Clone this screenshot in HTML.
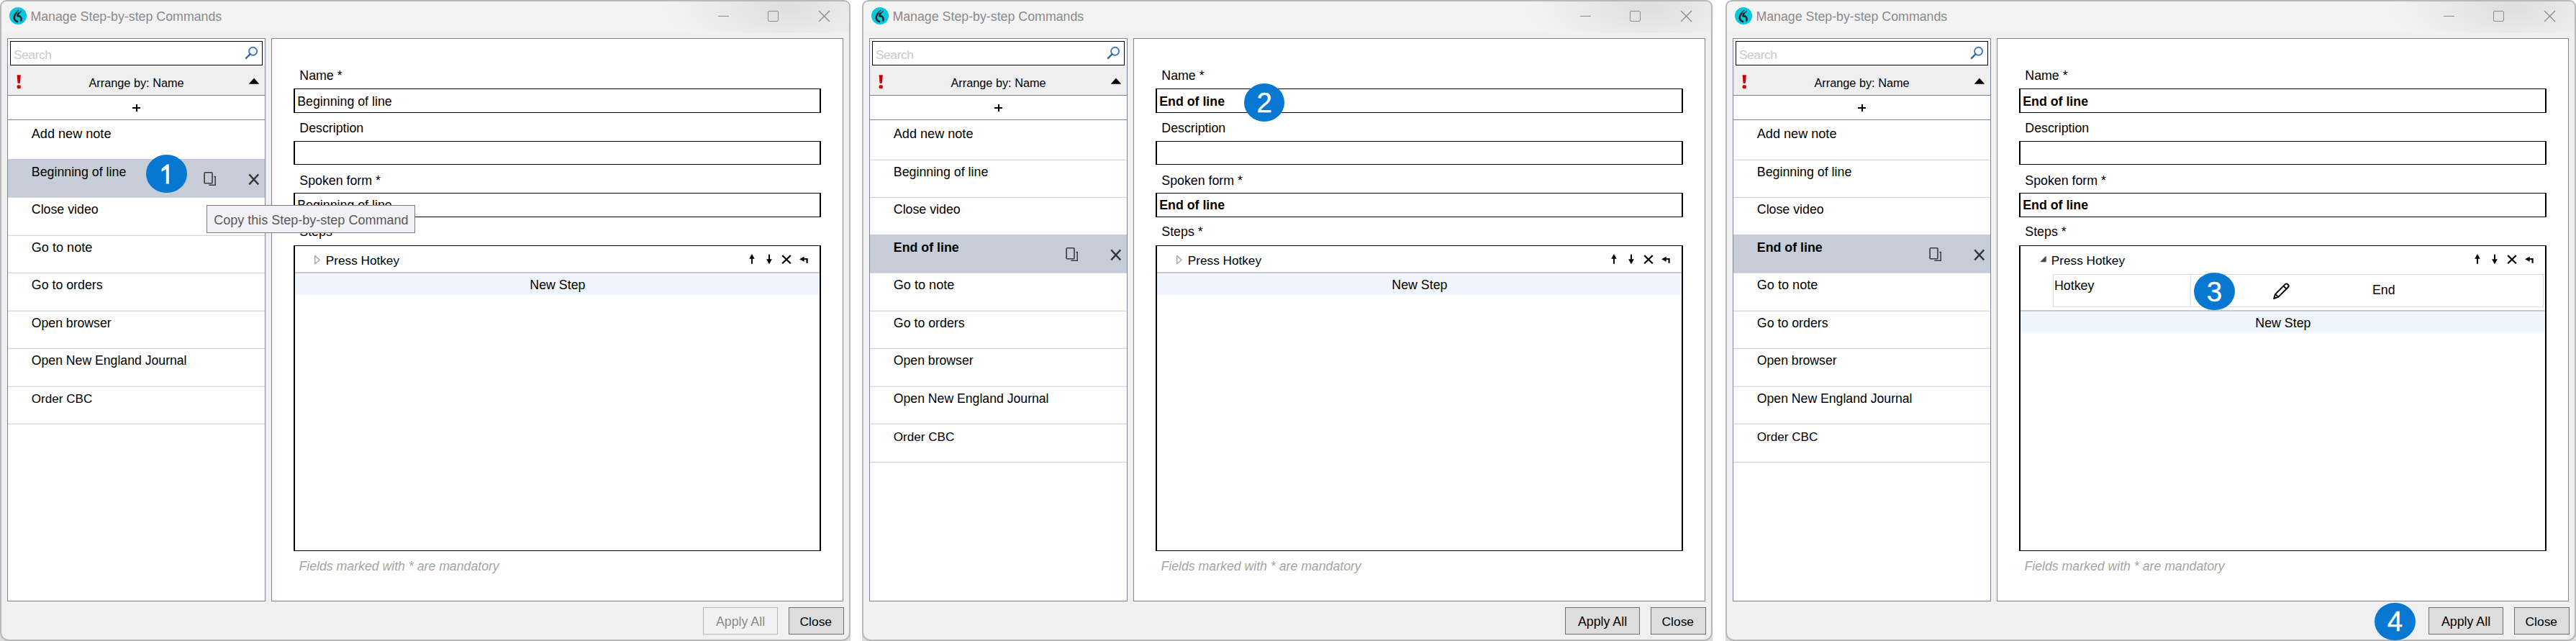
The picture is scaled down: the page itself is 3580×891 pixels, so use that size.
<!DOCTYPE html><html><head><meta charset="utf-8"><style>html,body{margin:0;padding:0;background:#fff;width:3580px;height:891px;overflow:hidden;position:relative;font-family:"Liberation Sans", sans-serif;}</style></head><body>
<div style="position:absolute;left:0.00px;top:878.00px;width:14.00px;height:13.00px;background:#dcdcdc"></div>
<div style="position:absolute;left:1168.00px;top:878.00px;width:14.00px;height:13.00px;background:#dcdcdc"></div>
<div style="position:absolute;left:0px;top:0;width:1182px;height:891px;box-sizing:border-box;border:2px solid #b8b8b8;border-radius:9px 9px 12px 12px;background:#f0f0f0;overflow:hidden"><div style="position:absolute;left:0;top:0;right:0;height:42.5px;background:radial-gradient(ellipse 170px 70px at 1090px 8px,#dedede 0%,#e8e8e8 45%,#f3f3f3 100%)"></div></div>
<div style="position:absolute;left:13px;top:9.8px;width:24px;height:24px;border-radius:50%;background:#05c8df"></div>
<svg style="position:absolute;left:13.00px;top:9.70px" width="24" height="24" viewBox="0 0 24 24"><g fill="none" stroke="#2a1d1d" stroke-linecap="round" stroke-linejoin="round"><path d="M12.7 4.2 Q10.5 6.3 8.6 8.8" stroke-width="1.3"/><path d="M9.2 8.6 C6.6 11.3 6.1 15.2 7.5 17.5 C8.4 19 9.7 19.7 11 19.9" stroke-width="2.6"/><path d="M16.6 5.4 L13 8.5" stroke-width="1.2"/><path d="M13.1 8.3 C12 9.6 11.4 11 11.3 12.4 L14.4 12.7" stroke-width="2.4"/><path d="M14.2 12.5 C16.4 13.5 17.2 15.6 16.2 18.7" stroke-width="2.3"/></g></svg>
<div style="position:absolute;left:42.40px;top:14.53px;font-size:17.8px;line-height:17.8px;color:#8a8a8a;font-weight:normal;font-style:normal;white-space:nowrap;">Manage Step-by-step Commands</div>
<div style="position:absolute;left:997.90px;top:22.00px;width:15.00px;height:1.30px;background:#8c8c8c"></div>
<div style="position:absolute;left:1067.20px;top:15.00px;width:14.50px;height:14.80px;box-sizing:border-box;border:1.5px solid #8c8c8c;border-radius:2px"></div>
<svg style="position:absolute;left:1137.00px;top:14.00px" width="17" height="17" viewBox="0 0 17 17"><path d="M1 1 L16 16 M16 1 L1 16" stroke="#8c8c8c" stroke-width="1.4"/></svg>
<div style="position:absolute;left:10.00px;top:53.00px;width:359.00px;height:783.00px;box-sizing:border-box;border:1.5px solid #7d8591;background:#fff"></div>
<div style="position:absolute;left:14.00px;top:57.00px;width:351.00px;height:34.00px;box-sizing:border-box;border:1.6px solid #000;background:#fff"></div>
<div style="position:absolute;left:18.90px;top:68.17px;font-size:17.4px;line-height:17.4px;color:#c9c9c9;font-weight:normal;font-style:normal;white-space:nowrap;letter-spacing:-0.4px">Search</div>
<svg style="position:absolute;left:338.00px;top:63.00px" width="22" height="22" viewBox="0 0 22 22"><circle cx="13.6" cy="8.2" r="5.5" fill="none" stroke="#3a78c8" stroke-width="1.9"/><path d="M9.6 12.2 L3.8 18" stroke="#2c5aa0" stroke-width="2.3" stroke-linecap="round"/></svg>
<div style="position:absolute;left:11.00px;top:91.00px;width:357.00px;height:41.00px;background:#efefef"></div>
<div style="position:absolute;left:11.00px;top:131.90px;width:357.00px;height:1.30px;background:#7d8591"></div>
<svg style="position:absolute;left:21.00px;top:101.00px" width="10" height="25" viewBox="0 0 10 25"><path d="M2.6 3.2 h5.2 l-1 11.6 h-3.2 z" fill="#c80000"/><rect x="2.6" y="17.3" width="5.2" height="4.8" rx="1.6" fill="#c80000"/></svg>
<div style="position:absolute;left:-110.50px;width:600px;text-align:center;top:107.00px;font-size:16.3px;line-height:16.3px;color:#000;font-weight:normal;white-space:nowrap;">Arrange by: Name</div>
<svg style="position:absolute;left:344.00px;top:107.00px" width="18" height="12" viewBox="0 0 18 12"><path d="M1.7 9.7 L9 1.6 L16.2 9.7 Z" fill="#000"/></svg>
<div style="position:absolute;left:11.00px;top:165.60px;width:357.00px;height:1.30px;background:#7d8591"></div>
<div style="position:absolute;left:184.10px;top:149.20px;width:11.20px;height:2.20px;background:#000"></div>
<div style="position:absolute;left:188.60px;top:145.00px;width:2.20px;height:10.40px;background:#000"></div>
<div style="position:absolute;left:11.00px;top:220.90px;width:357.00px;height:1.00px;background:#f1f1f3"></div>
<div style="position:absolute;left:11.00px;top:221.90px;width:357.00px;height:1.00px;background:#d8d9de"></div>
<div style="position:absolute;left:11.00px;top:273.40px;width:357.00px;height:1.00px;background:#f1f1f3"></div>
<div style="position:absolute;left:11.00px;top:274.40px;width:357.00px;height:1.00px;background:#d8d9de"></div>
<div style="position:absolute;left:11.00px;top:325.90px;width:357.00px;height:1.00px;background:#f1f1f3"></div>
<div style="position:absolute;left:11.00px;top:326.90px;width:357.00px;height:1.00px;background:#d8d9de"></div>
<div style="position:absolute;left:11.00px;top:378.40px;width:357.00px;height:1.00px;background:#f1f1f3"></div>
<div style="position:absolute;left:11.00px;top:379.40px;width:357.00px;height:1.00px;background:#d8d9de"></div>
<div style="position:absolute;left:11.00px;top:430.90px;width:357.00px;height:1.00px;background:#f1f1f3"></div>
<div style="position:absolute;left:11.00px;top:431.90px;width:357.00px;height:1.00px;background:#d8d9de"></div>
<div style="position:absolute;left:11.00px;top:483.40px;width:357.00px;height:1.00px;background:#f1f1f3"></div>
<div style="position:absolute;left:11.00px;top:484.40px;width:357.00px;height:1.00px;background:#d8d9de"></div>
<div style="position:absolute;left:11.00px;top:535.90px;width:357.00px;height:1.00px;background:#f1f1f3"></div>
<div style="position:absolute;left:11.00px;top:536.90px;width:357.00px;height:1.00px;background:#d8d9de"></div>
<div style="position:absolute;left:11.00px;top:588.40px;width:357.00px;height:1.00px;background:#f1f1f3"></div>
<div style="position:absolute;left:11.00px;top:589.40px;width:357.00px;height:1.00px;background:#d8d9de"></div>
<div style="position:absolute;left:43.80px;top:177.18px;font-size:18.1px;line-height:18.1px;color:#000;font-weight:normal;font-style:normal;white-space:nowrap;">Add new note</div>
<div style="position:absolute;left:11.00px;top:221.20px;width:357.00px;height:52.80px;background:#c6cdd9"></div>
<svg style="position:absolute;left:280.00px;top:236.80px" width="24" height="24" viewBox="0 0 24 24"><rect x="4.1" y="2.7" width="10.9" height="15" rx="1" fill="none" stroke="#3a3a3a" stroke-width="1.6"/><path d="M17.3 8.5 H19.2 V20.3 H10.3" fill="none" stroke="#3a3a3a" stroke-width="1.5"/></svg>
<svg style="position:absolute;left:342.00px;top:238.80px" width="22" height="22" viewBox="0 0 22 22"><path d="M4.3 3.4 L17.2 17.4 M17.2 3.4 L4.3 17.4" stroke="#353535" stroke-width="2.3"/></svg>
<div style="position:absolute;left:43.80px;top:230.83px;font-size:17.8px;line-height:17.8px;color:#000;font-weight:normal;font-style:normal;white-space:nowrap;">Beginning of line</div>
<div style="position:absolute;left:43.80px;top:283.33px;font-size:17.8px;line-height:17.8px;color:#000;font-weight:normal;font-style:normal;white-space:nowrap;">Close video</div>
<div style="position:absolute;left:43.80px;top:334.88px;font-size:18.1px;line-height:18.1px;color:#000;font-weight:normal;font-style:normal;white-space:nowrap;">Go to note</div>
<div style="position:absolute;left:43.80px;top:388.33px;font-size:17.8px;line-height:17.8px;color:#000;font-weight:normal;font-style:normal;white-space:nowrap;">Go to orders</div>
<div style="position:absolute;left:43.80px;top:440.96px;font-size:17.65px;line-height:17.65px;color:#000;font-weight:normal;font-style:normal;white-space:nowrap;">Open browser</div>
<div style="position:absolute;left:43.80px;top:493.46px;font-size:17.65px;line-height:17.65px;color:#000;font-weight:normal;font-style:normal;white-space:nowrap;">Open New England Journal</div>
<div style="position:absolute;left:43.80px;top:546.42px;font-size:17.1px;line-height:17.1px;color:#000;font-weight:normal;font-style:normal;white-space:nowrap;">Order CBC</div>
<div style="position:absolute;left:377.00px;top:53.00px;width:795.00px;height:783.00px;box-sizing:border-box;border:1.5px solid #7d8591;background:#fff"></div>
<div style="position:absolute;left:416.30px;top:96.83px;font-size:17.8px;line-height:17.8px;color:#000;font-weight:normal;font-style:normal;white-space:nowrap;">Name *</div>
<div style="position:absolute;left:416.30px;top:169.93px;font-size:17.8px;line-height:17.8px;color:#000;font-weight:normal;font-style:normal;white-space:nowrap;">Description</div>
<div style="position:absolute;left:416.30px;top:242.53px;font-size:17.8px;line-height:17.8px;color:#000;font-weight:normal;font-style:normal;white-space:nowrap;">Spoken form *</div>
<div style="position:absolute;left:416.30px;top:314.43px;font-size:17.8px;line-height:17.8px;color:#000;font-weight:normal;font-style:normal;white-space:nowrap;">Steps *</div>
<div style="position:absolute;left:408.30px;top:123.30px;width:733.20px;height:33.30px;box-sizing:border-box;border:1.6px solid #000;border-left-width:2px;border-right-width:2px;background:#fff"></div>
<div style="position:absolute;left:408.30px;top:196.30px;width:733.20px;height:32.60px;box-sizing:border-box;border:1.6px solid #000;border-left-width:2px;border-right-width:2px;background:#fff"></div>
<div style="position:absolute;left:408.30px;top:267.90px;width:733.20px;height:34.00px;box-sizing:border-box;border:1.6px solid #000;border-left-width:2px;border-right-width:2px;background:#fff"></div>
<div style="position:absolute;left:408.30px;top:340.50px;width:733.20px;height:425.00px;box-sizing:border-box;border:1.6px solid #000;border-left-width:2px;border-right-width:2px;background:#fff"></div>
<div style="position:absolute;left:413.20px;top:133.33px;font-size:17.8px;line-height:17.8px;color:#000;font-weight:normal;font-style:normal;white-space:nowrap;">Beginning of line</div>
<div style="position:absolute;left:413.20px;top:277.23px;font-size:17.8px;line-height:17.8px;color:#000;font-weight:normal;font-style:normal;white-space:nowrap;">Beginning of line</div>
<svg style="position:absolute;left:434.00px;top:352.00px" width="14" height="18" viewBox="0 0 14 18"><path d="M3.7 3.6 L10.1 9.2 L3.7 14.8 Z" fill="none" stroke="#a8a8a8" stroke-width="1.5" stroke-linejoin="round"/></svg>
<div style="position:absolute;left:452.80px;top:353.94px;font-size:17.2px;line-height:17.2px;color:#000;font-weight:normal;font-style:normal;white-space:nowrap;">Press Hotkey</div>
<svg style="position:absolute;left:1038.00px;top:350.00px" width="90" height="20" viewBox="0 0 90 20"><path d="M7 3 L10.7 9.7 H8 V16.8 H6 V9.7 H3.2 Z" fill="#000"/><path d="M32 3.7 V10.2 H34.8 L31 17.2 L27.1 10.2 H30 V3.7 Z" fill="#000"/><path d="M49.2 5 L60.8 16.3 M60.8 5 L49.2 16.3" stroke="#000" stroke-width="2.3"/><path d="M73 10.2 L79.7 6.7 V9 H84.7 V15.8 H82.5 V11.1 H79.7 V13.7 Z" fill="#000"/></svg>
<div style="position:absolute;left:410.30px;top:378.10px;width:729.20px;height:1.90px;background:#c8c8cc"></div>
<div style="position:absolute;left:410.30px;top:380.00px;width:729.20px;height:29.70px;background:#eef5fc"></div>
<div style="position:absolute;left:474.90px;width:600px;text-align:center;top:387.53px;font-size:17.8px;line-height:17.8px;color:#000;font-weight:normal;white-space:nowrap;">New Step</div>
<div style="position:absolute;left:415.50px;top:778.82px;font-size:17.7px;line-height:17.7px;color:#a4a4a4;font-weight:normal;font-style:italic;white-space:nowrap;">Fields marked with * are mandatory</div>
<div style="position:absolute;left:977.30px;top:844.40px;width:103.50px;height:37.40px;box-sizing:border-box;border:1.5px solid #b4b8bb;background:#f2f2f2"></div>
<div style="position:absolute;left:729.00px;width:600px;text-align:center;top:856.03px;font-size:17.8px;line-height:17.8px;color:#8b8b8b;font-weight:normal;white-space:nowrap;">Apply All</div>
<div style="position:absolute;left:1096.00px;top:844.40px;width:76.60px;height:37.40px;box-sizing:border-box;border:1.5px solid #707070;background:#dddddd"></div>
<div style="position:absolute;left:833.80px;width:600px;text-align:center;top:856.37px;font-size:17.4px;line-height:17.4px;color:#000;font-weight:normal;white-space:nowrap;">Close</div>
<div style="position:absolute;left:287.00px;top:285.20px;width:290.00px;height:38.50px;box-sizing:border-box;border:1.2px solid #7a7a7a;background:#f1f1f7"></div>
<div style="position:absolute;left:297.30px;top:297.06px;font-size:18.0px;line-height:18.0px;color:#575757;font-weight:normal;font-style:normal;white-space:nowrap;">Copy this Step-by-step Command</div>
<div style="position:absolute;left:203.20px;top:215.00px;width:56.4px;height:52.8px;border-radius:50%;background:#0778d2;"></div>
<svg style="position:absolute;left:221.40px;top:227.00px" width="20" height="30" viewBox="0 0 20 30"><path d="M10.8 1.5 H13.8 V28.5 H9.8 V8.2 L3.6 11.8 V7.8 Z" fill="#fff"/></svg>
<div style="position:absolute;left:1198.00px;top:878.00px;width:14.00px;height:13.00px;background:#dcdcdc"></div>
<div style="position:absolute;left:2366.00px;top:878.00px;width:14.00px;height:13.00px;background:#dcdcdc"></div>
<div style="position:absolute;left:1198px;top:0;width:1182px;height:891px;box-sizing:border-box;border:2px solid #b8b8b8;border-radius:9px 9px 12px 12px;background:#f0f0f0;overflow:hidden"><div style="position:absolute;left:0;top:0;right:0;height:42.5px;background:radial-gradient(ellipse 170px 70px at 1090px 8px,#dedede 0%,#e8e8e8 45%,#f3f3f3 100%)"></div></div>
<div style="position:absolute;left:1211px;top:9.8px;width:24px;height:24px;border-radius:50%;background:#05c8df"></div>
<svg style="position:absolute;left:1211.00px;top:9.70px" width="24" height="24" viewBox="0 0 24 24"><g fill="none" stroke="#2a1d1d" stroke-linecap="round" stroke-linejoin="round"><path d="M12.7 4.2 Q10.5 6.3 8.6 8.8" stroke-width="1.3"/><path d="M9.2 8.6 C6.6 11.3 6.1 15.2 7.5 17.5 C8.4 19 9.7 19.7 11 19.9" stroke-width="2.6"/><path d="M16.6 5.4 L13 8.5" stroke-width="1.2"/><path d="M13.1 8.3 C12 9.6 11.4 11 11.3 12.4 L14.4 12.7" stroke-width="2.4"/><path d="M14.2 12.5 C16.4 13.5 17.2 15.6 16.2 18.7" stroke-width="2.3"/></g></svg>
<div style="position:absolute;left:1240.40px;top:14.53px;font-size:17.8px;line-height:17.8px;color:#8a8a8a;font-weight:normal;font-style:normal;white-space:nowrap;">Manage Step-by-step Commands</div>
<div style="position:absolute;left:2195.90px;top:22.00px;width:15.00px;height:1.30px;background:#8c8c8c"></div>
<div style="position:absolute;left:2265.20px;top:15.00px;width:14.50px;height:14.80px;box-sizing:border-box;border:1.5px solid #8c8c8c;border-radius:2px"></div>
<svg style="position:absolute;left:2335.00px;top:14.00px" width="17" height="17" viewBox="0 0 17 17"><path d="M1 1 L16 16 M16 1 L1 16" stroke="#8c8c8c" stroke-width="1.4"/></svg>
<div style="position:absolute;left:1208.00px;top:53.00px;width:359.00px;height:783.00px;box-sizing:border-box;border:1.5px solid #7d8591;background:#fff"></div>
<div style="position:absolute;left:1212.00px;top:57.00px;width:351.00px;height:34.00px;box-sizing:border-box;border:1.6px solid #000;background:#fff"></div>
<div style="position:absolute;left:1216.90px;top:68.17px;font-size:17.4px;line-height:17.4px;color:#c9c9c9;font-weight:normal;font-style:normal;white-space:nowrap;letter-spacing:-0.4px">Search</div>
<svg style="position:absolute;left:1536.00px;top:63.00px" width="22" height="22" viewBox="0 0 22 22"><circle cx="13.6" cy="8.2" r="5.5" fill="none" stroke="#3a78c8" stroke-width="1.9"/><path d="M9.6 12.2 L3.8 18" stroke="#2c5aa0" stroke-width="2.3" stroke-linecap="round"/></svg>
<div style="position:absolute;left:1209.00px;top:91.00px;width:357.00px;height:41.00px;background:#efefef"></div>
<div style="position:absolute;left:1209.00px;top:131.90px;width:357.00px;height:1.30px;background:#7d8591"></div>
<svg style="position:absolute;left:1219.00px;top:101.00px" width="10" height="25" viewBox="0 0 10 25"><path d="M2.6 3.2 h5.2 l-1 11.6 h-3.2 z" fill="#c80000"/><rect x="2.6" y="17.3" width="5.2" height="4.8" rx="1.6" fill="#c80000"/></svg>
<div style="position:absolute;left:1087.50px;width:600px;text-align:center;top:107.00px;font-size:16.3px;line-height:16.3px;color:#000;font-weight:normal;white-space:nowrap;">Arrange by: Name</div>
<svg style="position:absolute;left:1542.00px;top:107.00px" width="18" height="12" viewBox="0 0 18 12"><path d="M1.7 9.7 L9 1.6 L16.2 9.7 Z" fill="#000"/></svg>
<div style="position:absolute;left:1209.00px;top:165.60px;width:357.00px;height:1.30px;background:#7d8591"></div>
<div style="position:absolute;left:1382.10px;top:149.20px;width:11.20px;height:2.20px;background:#000"></div>
<div style="position:absolute;left:1386.60px;top:145.00px;width:2.20px;height:10.40px;background:#000"></div>
<div style="position:absolute;left:1209.00px;top:220.90px;width:357.00px;height:1.00px;background:#f1f1f3"></div>
<div style="position:absolute;left:1209.00px;top:221.90px;width:357.00px;height:1.00px;background:#d8d9de"></div>
<div style="position:absolute;left:1209.00px;top:273.40px;width:357.00px;height:1.00px;background:#f1f1f3"></div>
<div style="position:absolute;left:1209.00px;top:274.40px;width:357.00px;height:1.00px;background:#d8d9de"></div>
<div style="position:absolute;left:1209.00px;top:325.90px;width:357.00px;height:1.00px;background:#f1f1f3"></div>
<div style="position:absolute;left:1209.00px;top:326.90px;width:357.00px;height:1.00px;background:#d8d9de"></div>
<div style="position:absolute;left:1209.00px;top:378.40px;width:357.00px;height:1.00px;background:#f1f1f3"></div>
<div style="position:absolute;left:1209.00px;top:379.40px;width:357.00px;height:1.00px;background:#d8d9de"></div>
<div style="position:absolute;left:1209.00px;top:430.90px;width:357.00px;height:1.00px;background:#f1f1f3"></div>
<div style="position:absolute;left:1209.00px;top:431.90px;width:357.00px;height:1.00px;background:#d8d9de"></div>
<div style="position:absolute;left:1209.00px;top:483.40px;width:357.00px;height:1.00px;background:#f1f1f3"></div>
<div style="position:absolute;left:1209.00px;top:484.40px;width:357.00px;height:1.00px;background:#d8d9de"></div>
<div style="position:absolute;left:1209.00px;top:535.90px;width:357.00px;height:1.00px;background:#f1f1f3"></div>
<div style="position:absolute;left:1209.00px;top:536.90px;width:357.00px;height:1.00px;background:#d8d9de"></div>
<div style="position:absolute;left:1209.00px;top:588.40px;width:357.00px;height:1.00px;background:#f1f1f3"></div>
<div style="position:absolute;left:1209.00px;top:589.40px;width:357.00px;height:1.00px;background:#d8d9de"></div>
<div style="position:absolute;left:1209.00px;top:640.90px;width:357.00px;height:1.00px;background:#f1f1f3"></div>
<div style="position:absolute;left:1209.00px;top:641.90px;width:357.00px;height:1.00px;background:#d8d9de"></div>
<div style="position:absolute;left:1241.80px;top:177.18px;font-size:18.1px;line-height:18.1px;color:#000;font-weight:normal;font-style:normal;white-space:nowrap;">Add new note</div>
<div style="position:absolute;left:1241.80px;top:230.83px;font-size:17.8px;line-height:17.8px;color:#000;font-weight:normal;font-style:normal;white-space:nowrap;">Beginning of line</div>
<div style="position:absolute;left:1241.80px;top:283.33px;font-size:17.8px;line-height:17.8px;color:#000;font-weight:normal;font-style:normal;white-space:nowrap;">Close video</div>
<div style="position:absolute;left:1209.00px;top:326.20px;width:357.00px;height:52.80px;background:#c6cdd9"></div>
<svg style="position:absolute;left:1478.00px;top:341.80px" width="24" height="24" viewBox="0 0 24 24"><rect x="4.1" y="2.7" width="10.9" height="15" rx="1" fill="none" stroke="#3a3a3a" stroke-width="1.6"/><path d="M17.3 8.5 H19.2 V20.3 H10.3" fill="none" stroke="#3a3a3a" stroke-width="1.5"/></svg>
<svg style="position:absolute;left:1540.00px;top:343.80px" width="22" height="22" viewBox="0 0 22 22"><path d="M4.3 3.4 L17.2 17.4 M17.2 3.4 L4.3 17.4" stroke="#353535" stroke-width="2.3"/></svg>
<div style="position:absolute;left:1241.80px;top:335.83px;font-size:17.8px;line-height:17.8px;color:#000;font-weight:bold;font-style:normal;white-space:nowrap;">End of line</div>
<div style="position:absolute;left:1241.80px;top:387.38px;font-size:18.1px;line-height:18.1px;color:#000;font-weight:normal;font-style:normal;white-space:nowrap;">Go to note</div>
<div style="position:absolute;left:1241.80px;top:440.83px;font-size:17.8px;line-height:17.8px;color:#000;font-weight:normal;font-style:normal;white-space:nowrap;">Go to orders</div>
<div style="position:absolute;left:1241.80px;top:493.46px;font-size:17.65px;line-height:17.65px;color:#000;font-weight:normal;font-style:normal;white-space:nowrap;">Open browser</div>
<div style="position:absolute;left:1241.80px;top:545.96px;font-size:17.65px;line-height:17.65px;color:#000;font-weight:normal;font-style:normal;white-space:nowrap;">Open New England Journal</div>
<div style="position:absolute;left:1241.80px;top:598.92px;font-size:17.1px;line-height:17.1px;color:#000;font-weight:normal;font-style:normal;white-space:nowrap;">Order CBC</div>
<div style="position:absolute;left:1575.00px;top:53.00px;width:795.00px;height:783.00px;box-sizing:border-box;border:1.5px solid #7d8591;background:#fff"></div>
<div style="position:absolute;left:1614.30px;top:96.83px;font-size:17.8px;line-height:17.8px;color:#000;font-weight:normal;font-style:normal;white-space:nowrap;">Name *</div>
<div style="position:absolute;left:1614.30px;top:169.93px;font-size:17.8px;line-height:17.8px;color:#000;font-weight:normal;font-style:normal;white-space:nowrap;">Description</div>
<div style="position:absolute;left:1614.30px;top:242.53px;font-size:17.8px;line-height:17.8px;color:#000;font-weight:normal;font-style:normal;white-space:nowrap;">Spoken form *</div>
<div style="position:absolute;left:1614.30px;top:314.43px;font-size:17.8px;line-height:17.8px;color:#000;font-weight:normal;font-style:normal;white-space:nowrap;">Steps *</div>
<div style="position:absolute;left:1606.30px;top:123.30px;width:733.20px;height:33.30px;box-sizing:border-box;border:1.6px solid #000;border-left-width:2px;border-right-width:2px;background:#fff"></div>
<div style="position:absolute;left:1606.30px;top:196.30px;width:733.20px;height:32.60px;box-sizing:border-box;border:1.6px solid #000;border-left-width:2px;border-right-width:2px;background:#fff"></div>
<div style="position:absolute;left:1606.30px;top:267.90px;width:733.20px;height:34.00px;box-sizing:border-box;border:1.6px solid #000;border-left-width:2px;border-right-width:2px;background:#fff"></div>
<div style="position:absolute;left:1606.30px;top:340.50px;width:733.20px;height:425.00px;box-sizing:border-box;border:1.6px solid #000;border-left-width:2px;border-right-width:2px;background:#fff"></div>
<div style="position:absolute;left:1611.20px;top:133.13px;font-size:17.8px;line-height:17.8px;color:#000;font-weight:bold;font-style:normal;white-space:nowrap;">End of line</div>
<div style="position:absolute;left:1611.20px;top:277.03px;font-size:17.8px;line-height:17.8px;color:#000;font-weight:bold;font-style:normal;white-space:nowrap;">End of line</div>
<svg style="position:absolute;left:1632.00px;top:352.00px" width="14" height="18" viewBox="0 0 14 18"><path d="M3.7 3.6 L10.1 9.2 L3.7 14.8 Z" fill="none" stroke="#a8a8a8" stroke-width="1.5" stroke-linejoin="round"/></svg>
<div style="position:absolute;left:1650.80px;top:353.94px;font-size:17.2px;line-height:17.2px;color:#000;font-weight:normal;font-style:normal;white-space:nowrap;">Press Hotkey</div>
<svg style="position:absolute;left:2236.00px;top:350.00px" width="90" height="20" viewBox="0 0 90 20"><path d="M7 3 L10.7 9.7 H8 V16.8 H6 V9.7 H3.2 Z" fill="#000"/><path d="M32 3.7 V10.2 H34.8 L31 17.2 L27.1 10.2 H30 V3.7 Z" fill="#000"/><path d="M49.2 5 L60.8 16.3 M60.8 5 L49.2 16.3" stroke="#000" stroke-width="2.3"/><path d="M73 10.2 L79.7 6.7 V9 H84.7 V15.8 H82.5 V11.1 H79.7 V13.7 Z" fill="#000"/></svg>
<div style="position:absolute;left:1608.30px;top:378.10px;width:729.20px;height:1.90px;background:#c8c8cc"></div>
<div style="position:absolute;left:1608.30px;top:380.00px;width:729.20px;height:29.70px;background:#eef5fc"></div>
<div style="position:absolute;left:1672.90px;width:600px;text-align:center;top:387.53px;font-size:17.8px;line-height:17.8px;color:#000;font-weight:normal;white-space:nowrap;">New Step</div>
<div style="position:absolute;left:1613.50px;top:778.82px;font-size:17.7px;line-height:17.7px;color:#a4a4a4;font-weight:normal;font-style:italic;white-space:nowrap;">Fields marked with * are mandatory</div>
<div style="position:absolute;left:2175.30px;top:844.40px;width:103.50px;height:37.40px;box-sizing:border-box;border:1.5px solid #707070;background:#dddddd"></div>
<div style="position:absolute;left:1927.00px;width:600px;text-align:center;top:856.03px;font-size:17.8px;line-height:17.8px;color:#000;font-weight:normal;white-space:nowrap;">Apply All</div>
<div style="position:absolute;left:2294.00px;top:844.40px;width:76.60px;height:37.40px;box-sizing:border-box;border:1.5px solid #707070;background:#dddddd"></div>
<div style="position:absolute;left:2031.80px;width:600px;text-align:center;top:856.37px;font-size:17.4px;line-height:17.4px;color:#000;font-weight:normal;white-space:nowrap;">Close</div>
<div style="position:absolute;left:1729.10px;top:116.10px;width:56.4px;height:52.8px;border-radius:50%;background:#0778d2;"></div>
<div style="position:absolute;left:1457.30px;width:600px;text-align:center;top:123.61px;font-size:38.5px;line-height:38.5px;color:#fff;font-weight:normal;white-space:nowrap;-webkit-text-stroke:0.35px #fff">2</div>
<div style="position:absolute;left:2398.00px;top:878.00px;width:14.00px;height:13.00px;background:#dcdcdc"></div>
<div style="position:absolute;left:3566.00px;top:878.00px;width:14.00px;height:13.00px;background:#dcdcdc"></div>
<div style="position:absolute;left:2398px;top:0;width:1182px;height:891px;box-sizing:border-box;border:2px solid #b8b8b8;border-radius:9px 9px 12px 12px;background:#f0f0f0;overflow:hidden"><div style="position:absolute;left:0;top:0;right:0;height:42.5px;background:radial-gradient(ellipse 170px 70px at 1090px 8px,#dedede 0%,#e8e8e8 45%,#f3f3f3 100%)"></div></div>
<div style="position:absolute;left:2411px;top:9.8px;width:24px;height:24px;border-radius:50%;background:#05c8df"></div>
<svg style="position:absolute;left:2411.00px;top:9.70px" width="24" height="24" viewBox="0 0 24 24"><g fill="none" stroke="#2a1d1d" stroke-linecap="round" stroke-linejoin="round"><path d="M12.7 4.2 Q10.5 6.3 8.6 8.8" stroke-width="1.3"/><path d="M9.2 8.6 C6.6 11.3 6.1 15.2 7.5 17.5 C8.4 19 9.7 19.7 11 19.9" stroke-width="2.6"/><path d="M16.6 5.4 L13 8.5" stroke-width="1.2"/><path d="M13.1 8.3 C12 9.6 11.4 11 11.3 12.4 L14.4 12.7" stroke-width="2.4"/><path d="M14.2 12.5 C16.4 13.5 17.2 15.6 16.2 18.7" stroke-width="2.3"/></g></svg>
<div style="position:absolute;left:2440.40px;top:14.53px;font-size:17.8px;line-height:17.8px;color:#8a8a8a;font-weight:normal;font-style:normal;white-space:nowrap;">Manage Step-by-step Commands</div>
<div style="position:absolute;left:3395.90px;top:22.00px;width:15.00px;height:1.30px;background:#8c8c8c"></div>
<div style="position:absolute;left:3465.20px;top:15.00px;width:14.50px;height:14.80px;box-sizing:border-box;border:1.5px solid #8c8c8c;border-radius:2px"></div>
<svg style="position:absolute;left:3535.00px;top:14.00px" width="17" height="17" viewBox="0 0 17 17"><path d="M1 1 L16 16 M16 1 L1 16" stroke="#8c8c8c" stroke-width="1.4"/></svg>
<div style="position:absolute;left:2408.00px;top:53.00px;width:359.00px;height:783.00px;box-sizing:border-box;border:1.5px solid #7d8591;background:#fff"></div>
<div style="position:absolute;left:2412.00px;top:57.00px;width:351.00px;height:34.00px;box-sizing:border-box;border:1.6px solid #000;background:#fff"></div>
<div style="position:absolute;left:2416.90px;top:68.17px;font-size:17.4px;line-height:17.4px;color:#c9c9c9;font-weight:normal;font-style:normal;white-space:nowrap;letter-spacing:-0.4px">Search</div>
<svg style="position:absolute;left:2736.00px;top:63.00px" width="22" height="22" viewBox="0 0 22 22"><circle cx="13.6" cy="8.2" r="5.5" fill="none" stroke="#3a78c8" stroke-width="1.9"/><path d="M9.6 12.2 L3.8 18" stroke="#2c5aa0" stroke-width="2.3" stroke-linecap="round"/></svg>
<div style="position:absolute;left:2409.00px;top:91.00px;width:357.00px;height:41.00px;background:#efefef"></div>
<div style="position:absolute;left:2409.00px;top:131.90px;width:357.00px;height:1.30px;background:#7d8591"></div>
<svg style="position:absolute;left:2419.00px;top:101.00px" width="10" height="25" viewBox="0 0 10 25"><path d="M2.6 3.2 h5.2 l-1 11.6 h-3.2 z" fill="#c80000"/><rect x="2.6" y="17.3" width="5.2" height="4.8" rx="1.6" fill="#c80000"/></svg>
<div style="position:absolute;left:2287.50px;width:600px;text-align:center;top:107.00px;font-size:16.3px;line-height:16.3px;color:#000;font-weight:normal;white-space:nowrap;">Arrange by: Name</div>
<svg style="position:absolute;left:2742.00px;top:107.00px" width="18" height="12" viewBox="0 0 18 12"><path d="M1.7 9.7 L9 1.6 L16.2 9.7 Z" fill="#000"/></svg>
<div style="position:absolute;left:2409.00px;top:165.60px;width:357.00px;height:1.30px;background:#7d8591"></div>
<div style="position:absolute;left:2582.10px;top:149.20px;width:11.20px;height:2.20px;background:#000"></div>
<div style="position:absolute;left:2586.60px;top:145.00px;width:2.20px;height:10.40px;background:#000"></div>
<div style="position:absolute;left:2409.00px;top:220.90px;width:357.00px;height:1.00px;background:#f1f1f3"></div>
<div style="position:absolute;left:2409.00px;top:221.90px;width:357.00px;height:1.00px;background:#d8d9de"></div>
<div style="position:absolute;left:2409.00px;top:273.40px;width:357.00px;height:1.00px;background:#f1f1f3"></div>
<div style="position:absolute;left:2409.00px;top:274.40px;width:357.00px;height:1.00px;background:#d8d9de"></div>
<div style="position:absolute;left:2409.00px;top:325.90px;width:357.00px;height:1.00px;background:#f1f1f3"></div>
<div style="position:absolute;left:2409.00px;top:326.90px;width:357.00px;height:1.00px;background:#d8d9de"></div>
<div style="position:absolute;left:2409.00px;top:378.40px;width:357.00px;height:1.00px;background:#f1f1f3"></div>
<div style="position:absolute;left:2409.00px;top:379.40px;width:357.00px;height:1.00px;background:#d8d9de"></div>
<div style="position:absolute;left:2409.00px;top:430.90px;width:357.00px;height:1.00px;background:#f1f1f3"></div>
<div style="position:absolute;left:2409.00px;top:431.90px;width:357.00px;height:1.00px;background:#d8d9de"></div>
<div style="position:absolute;left:2409.00px;top:483.40px;width:357.00px;height:1.00px;background:#f1f1f3"></div>
<div style="position:absolute;left:2409.00px;top:484.40px;width:357.00px;height:1.00px;background:#d8d9de"></div>
<div style="position:absolute;left:2409.00px;top:535.90px;width:357.00px;height:1.00px;background:#f1f1f3"></div>
<div style="position:absolute;left:2409.00px;top:536.90px;width:357.00px;height:1.00px;background:#d8d9de"></div>
<div style="position:absolute;left:2409.00px;top:588.40px;width:357.00px;height:1.00px;background:#f1f1f3"></div>
<div style="position:absolute;left:2409.00px;top:589.40px;width:357.00px;height:1.00px;background:#d8d9de"></div>
<div style="position:absolute;left:2409.00px;top:640.90px;width:357.00px;height:1.00px;background:#f1f1f3"></div>
<div style="position:absolute;left:2409.00px;top:641.90px;width:357.00px;height:1.00px;background:#d8d9de"></div>
<div style="position:absolute;left:2441.80px;top:177.18px;font-size:18.1px;line-height:18.1px;color:#000;font-weight:normal;font-style:normal;white-space:nowrap;">Add new note</div>
<div style="position:absolute;left:2441.80px;top:230.83px;font-size:17.8px;line-height:17.8px;color:#000;font-weight:normal;font-style:normal;white-space:nowrap;">Beginning of line</div>
<div style="position:absolute;left:2441.80px;top:283.33px;font-size:17.8px;line-height:17.8px;color:#000;font-weight:normal;font-style:normal;white-space:nowrap;">Close video</div>
<div style="position:absolute;left:2409.00px;top:326.20px;width:357.00px;height:52.80px;background:#c6cdd9"></div>
<svg style="position:absolute;left:2678.00px;top:341.80px" width="24" height="24" viewBox="0 0 24 24"><rect x="4.1" y="2.7" width="10.9" height="15" rx="1" fill="none" stroke="#3a3a3a" stroke-width="1.6"/><path d="M17.3 8.5 H19.2 V20.3 H10.3" fill="none" stroke="#3a3a3a" stroke-width="1.5"/></svg>
<svg style="position:absolute;left:2740.00px;top:343.80px" width="22" height="22" viewBox="0 0 22 22"><path d="M4.3 3.4 L17.2 17.4 M17.2 3.4 L4.3 17.4" stroke="#353535" stroke-width="2.3"/></svg>
<div style="position:absolute;left:2441.80px;top:335.83px;font-size:17.8px;line-height:17.8px;color:#000;font-weight:bold;font-style:normal;white-space:nowrap;">End of line</div>
<div style="position:absolute;left:2441.80px;top:387.38px;font-size:18.1px;line-height:18.1px;color:#000;font-weight:normal;font-style:normal;white-space:nowrap;">Go to note</div>
<div style="position:absolute;left:2441.80px;top:440.83px;font-size:17.8px;line-height:17.8px;color:#000;font-weight:normal;font-style:normal;white-space:nowrap;">Go to orders</div>
<div style="position:absolute;left:2441.80px;top:493.46px;font-size:17.65px;line-height:17.65px;color:#000;font-weight:normal;font-style:normal;white-space:nowrap;">Open browser</div>
<div style="position:absolute;left:2441.80px;top:545.96px;font-size:17.65px;line-height:17.65px;color:#000;font-weight:normal;font-style:normal;white-space:nowrap;">Open New England Journal</div>
<div style="position:absolute;left:2441.80px;top:598.92px;font-size:17.1px;line-height:17.1px;color:#000;font-weight:normal;font-style:normal;white-space:nowrap;">Order CBC</div>
<div style="position:absolute;left:2775.00px;top:53.00px;width:795.00px;height:783.00px;box-sizing:border-box;border:1.5px solid #7d8591;background:#fff"></div>
<div style="position:absolute;left:2814.30px;top:96.83px;font-size:17.8px;line-height:17.8px;color:#000;font-weight:normal;font-style:normal;white-space:nowrap;">Name *</div>
<div style="position:absolute;left:2814.30px;top:169.93px;font-size:17.8px;line-height:17.8px;color:#000;font-weight:normal;font-style:normal;white-space:nowrap;">Description</div>
<div style="position:absolute;left:2814.30px;top:242.53px;font-size:17.8px;line-height:17.8px;color:#000;font-weight:normal;font-style:normal;white-space:nowrap;">Spoken form *</div>
<div style="position:absolute;left:2814.30px;top:314.43px;font-size:17.8px;line-height:17.8px;color:#000;font-weight:normal;font-style:normal;white-space:nowrap;">Steps *</div>
<div style="position:absolute;left:2806.30px;top:123.30px;width:733.20px;height:33.30px;box-sizing:border-box;border:1.6px solid #000;border-left-width:2px;border-right-width:2px;background:#fff"></div>
<div style="position:absolute;left:2806.30px;top:196.30px;width:733.20px;height:32.60px;box-sizing:border-box;border:1.6px solid #000;border-left-width:2px;border-right-width:2px;background:#fff"></div>
<div style="position:absolute;left:2806.30px;top:267.90px;width:733.20px;height:34.00px;box-sizing:border-box;border:1.6px solid #000;border-left-width:2px;border-right-width:2px;background:#fff"></div>
<div style="position:absolute;left:2806.30px;top:340.50px;width:733.20px;height:425.00px;box-sizing:border-box;border:1.6px solid #000;border-left-width:2px;border-right-width:2px;background:#fff"></div>
<div style="position:absolute;left:2811.20px;top:133.13px;font-size:17.8px;line-height:17.8px;color:#000;font-weight:bold;font-style:normal;white-space:nowrap;">End of line</div>
<div style="position:absolute;left:2811.20px;top:277.03px;font-size:17.8px;line-height:17.8px;color:#000;font-weight:bold;font-style:normal;white-space:nowrap;">End of line</div>
<svg style="position:absolute;left:2832.00px;top:352.00px" width="14" height="16" viewBox="0 0 14 16"><path d="M11.2 4.4 V11.8 H4 Z" fill="#444" stroke="#444" stroke-width="0.9" stroke-linejoin="round"/></svg>
<div style="position:absolute;left:2850.80px;top:353.94px;font-size:17.2px;line-height:17.2px;color:#000;font-weight:normal;font-style:normal;white-space:nowrap;">Press Hotkey</div>
<svg style="position:absolute;left:3436.00px;top:350.00px" width="90" height="20" viewBox="0 0 90 20"><path d="M7 3 L10.7 9.7 H8 V16.8 H6 V9.7 H3.2 Z" fill="#000"/><path d="M32 3.7 V10.2 H34.8 L31 17.2 L27.1 10.2 H30 V3.7 Z" fill="#000"/><path d="M49.2 5 L60.8 16.3 M60.8 5 L49.2 16.3" stroke="#000" stroke-width="2.3"/><path d="M73 10.2 L79.7 6.7 V9 H84.7 V15.8 H82.5 V11.1 H79.7 V13.7 Z" fill="#000"/></svg>
<div style="position:absolute;left:2853.20px;top:381.20px;width:681.80px;height:46.30px;box-sizing:border-box;border:1px solid #dcdcdc"></div>
<div style="position:absolute;left:3043.50px;top:382.00px;width:1.00px;height:45.00px;background:#e2e2e2"></div>
<div style="position:absolute;left:2855.00px;top:389.03px;font-size:17.8px;line-height:17.8px;color:#000;font-weight:normal;font-style:normal;white-space:nowrap;">Hotkey</div>
<div style="position:absolute;left:3297.00px;top:394.73px;font-size:17.8px;line-height:17.8px;color:#000;font-weight:normal;font-style:normal;white-space:nowrap;">End</div>
<svg style="position:absolute;left:3157.00px;top:391.00px" width="30" height="30" viewBox="0 0 30 30"><g transform="translate(3.1 24.0) rotate(-45)" fill="none" stroke="#000" stroke-width="1.9" stroke-linejoin="round"><path d="M0 0 L5.8 -2.9 H24.8 A2.9 2.9 0 0 1 24.8 2.9 H5.8 Z"/><path d="M5.8 -2.9 V2.9 M21.8 -2.9 V2.9"/></g></svg>
<div style="position:absolute;left:2808.30px;top:430.80px;width:729.20px;height:1.90px;background:#c8c8cc"></div>
<div style="position:absolute;left:2808.30px;top:432.70px;width:729.20px;height:29.30px;background:#eef5fc"></div>
<div style="position:absolute;left:2872.90px;width:600px;text-align:center;top:440.73px;font-size:17.8px;line-height:17.8px;color:#000;font-weight:normal;white-space:nowrap;">New Step</div>
<div style="position:absolute;left:2813.50px;top:778.82px;font-size:17.7px;line-height:17.7px;color:#a4a4a4;font-weight:normal;font-style:italic;white-space:nowrap;">Fields marked with * are mandatory</div>
<div style="position:absolute;left:3375.30px;top:844.40px;width:103.50px;height:37.40px;box-sizing:border-box;border:1.5px solid #707070;background:#dddddd"></div>
<div style="position:absolute;left:3127.00px;width:600px;text-align:center;top:856.03px;font-size:17.8px;line-height:17.8px;color:#000;font-weight:normal;white-space:nowrap;">Apply All</div>
<div style="position:absolute;left:3494.00px;top:844.40px;width:76.60px;height:37.40px;box-sizing:border-box;border:1.5px solid #707070;background:#dddddd"></div>
<div style="position:absolute;left:3231.80px;width:600px;text-align:center;top:856.37px;font-size:17.4px;line-height:17.4px;color:#000;font-weight:normal;white-space:nowrap;">Close</div>
<div style="position:absolute;left:3049.30px;top:378.60px;width:56.4px;height:52.8px;border-radius:50%;background:#0778d2;"></div>
<div style="position:absolute;left:2777.50px;width:600px;text-align:center;top:387.11px;font-size:38.5px;line-height:38.5px;color:#fff;font-weight:normal;white-space:nowrap;-webkit-text-stroke:0.35px #fff">3</div>
<div style="position:absolute;left:3300.30px;top:837.60px;width:56.4px;height:52.8px;border-radius:50%;background:#0778d2;"></div>
<div style="position:absolute;left:3028.50px;width:600px;text-align:center;top:845.11px;font-size:38.5px;line-height:38.5px;color:#fff;font-weight:normal;white-space:nowrap;-webkit-text-stroke:0.35px #fff">4</div>
</body></html>
